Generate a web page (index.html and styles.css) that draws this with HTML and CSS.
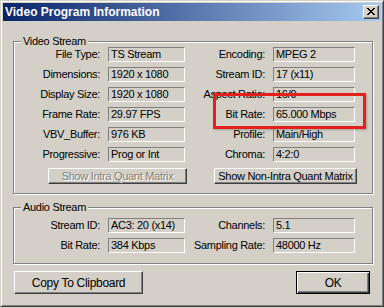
FILE: index.html
```html
<!DOCTYPE html>
<html>
<head>
  <meta charset="UTF-8" />
  <title>Video Program Information</title>
  <link rel="stylesheet" href="styles.css">
</head>
<body>
  <div class="window">
    <div class="titlebar">
      <span class="title">Video Program Information</span>
      <button class="close-btn">
        <svg width="8" height="7" viewBox="0 0 8 7" shape-rendering="crispEdges">
          <path d="M0 0h2v1H0zM6 0h2v1H6zM1 1h2v1H1zM5 1h2v1H5zM2 2h4v1H2zM3 3h2v1H3zM2 4h4v1H2zM1 5h2v1H1zM5 5h2v1H5zM0 6h2v1H0zM6 6h2v1H6z" fill="#000"/>
        </svg>
      </button>
    </div>

    <div class="dialog">
      <div class="group video-group">
        <span class="group-title">Video Stream</span>
        <div class="rows">
          <span class="label">File Type:</span><span class="field">TS Stream</span>
          <span class="label">Encoding:</span><span class="field">MPEG 2</span>

          <span class="label">Dimensions:</span><span class="field">1920 x 1080</span>
          <span class="label">Stream ID:</span><span class="field">17 (x11)</span>

          <span class="label">Display Size:</span><span class="field">1920 x 1080</span>
          <span class="label">Aspect Ratio:</span><span class="field">16/9</span>

          <span class="label">Frame Rate:</span><span class="field">29.97 FPS</span>
          <span class="label">Bit Rate:</span><span class="field">65.000 Mbps</span>

          <span class="label">VBV_Buffer:</span><span class="field">976 KB</span>
          <span class="label">Profile:</span><span class="field">Main/High</span>

          <span class="label">Progressive:</span><span class="field">Prog or Int</span>
          <span class="label">Chroma:</span><span class="field">4:2:0</span>
        </div>
        <div class="matrix-buttons">
          <button class="btn btn-intra" disabled>Show Intra Quant Matrix</button>
          <button class="btn btn-nonintra">Show Non-Intra Quant Matrix</button>
        </div>
      </div>

      <div class="group audio-group">
        <span class="group-title">Audio Stream</span>
        <div class="rows">
          <span class="label">Stream ID:</span><span class="field">AC3: 20 (x14)</span>
          <span class="label">Channels:</span><span class="field">5.1</span>

          <span class="label">Bit Rate:</span><span class="field">384 Kbps</span>
          <span class="label">Sampling Rate:</span><span class="field">48000 Hz</span>
        </div>
      </div>

      <div class="dialog-buttons">
        <button class="btn btn-copy">Copy To Clipboard</button>
        <button class="btn btn-ok">OK</button>
      </div>
    </div>

    <!-- annotation drawn over the dialog -->
    <div class="highlight"></div>
  </div>
</body>
</html>
```

FILE: styles.css
```css
:root {
  --face: #d4d0c8;
  --shadow: #808080;
  --dark: #404040;
  --light: #ffffff;
}

* {
  margin: 0;
  padding: 0;
  box-sizing: border-box;
}

body {
  background-color: var(--face);
  font-family: "Liberation Sans", Arial, sans-serif;
  font-size: 11px;
  letter-spacing: -0.3px;
  color: #000;
}

.window {
  position: relative;
  width: 384px;
  height: 307px;
  padding: 2px;
  background-color: var(--face);
  border: 1px solid;
  border-color: var(--face) var(--dark) var(--dark) var(--face);
  box-shadow: inset 1px 1px 0 var(--light), inset -1px -1px 0 var(--shadow);
}

.titlebar {
  height: 18px;
  display: flex;
  align-items: center;
  justify-content: space-between;
  padding: 0 2px;
  background: linear-gradient(to right, #0a246a, #a6caf0);
}

.title {
  color: #fff;
  font-weight: bold;
  font-size: 12px;
  letter-spacing: 0;
  line-height: 18px;
}

.close-btn {
  width: 16px;
  height: 14px;
  display: flex;
  align-items: center;
  justify-content: center;
  background-color: var(--face);
  border: 1px solid;
  border-color: var(--light) var(--dark) var(--dark) var(--light);
  box-shadow: inset -1px -1px 0 var(--shadow);
  padding-bottom: 1px;
}

.dialog {
  padding: 20px 8px 0 10px;
}

.group {
  position: relative;
  border: 1px solid var(--shadow);
  box-shadow: 1px 1px 0 var(--light), inset 1px 1px 0 var(--light);
}

.group-title {
  position: absolute;
  top: -7px;
  left: 7px;
  padding: 0 2px;
  line-height: 13px;
  background-color: var(--face);
}

.video-group {
  padding: 5px 0 9px;
}

.audio-group {
  margin-top: 13px;
  padding: 10px 0;
}

.rows {
  display: grid;
  grid-template-columns: 94px 77px 88px 82px;
  grid-auto-rows: 15px;
  row-gap: 5px;
}

.label {
  text-align: right;
  padding-right: 8px;
  line-height: 15px;
  white-space: nowrap;
}

.field {
  line-height: 13px;
  padding-left: 2px;
  white-space: nowrap;
  overflow: hidden;
  border: 1px solid;
  border-color: var(--shadow) var(--light) var(--light) var(--shadow);
}

.btn {
  font-family: inherit;
  font-size: 11px;
  letter-spacing: -0.3px;
  color: #000;
  background-color: var(--face);
  border: 1px solid;
  border-color: var(--light) var(--dark) var(--dark) var(--light);
  box-shadow: inset -1px -1px 0 var(--shadow);
  white-space: nowrap;
}

.matrix-buttons {
  display: flex;
  gap: 27px;
  margin: 6px 0 0 34px;
}

.matrix-buttons .btn {
  height: 16px;
  line-height: 13px;
}

.btn-intra {
  width: 139px;
}

.btn-intra:disabled {
  color: var(--shadow);
  text-shadow: 1px 1px 0 var(--light);
}

.btn-nonintra {
  width: 143px;
}

.dialog-buttons {
  display: flex;
  justify-content: space-between;
  margin: 7px 3px 0 1px;
}

.dialog-buttons .btn {
  height: 23px;
  font-size: 12px;
}

.btn-copy {
  width: 129px;
}

.btn-ok {
  width: 74px;
  border: 1px solid #000;
  box-shadow: inset 1px 1px 0 var(--light), inset -1px -1px 0 var(--dark), inset -2px -2px 0 var(--shadow);
}

.highlight {
  position: absolute;
  left: 212px;
  top: 92px;
  width: 153px;
  height: 36px;
  border: 3px solid #e3201b;
  box-shadow: 1px 1px 2px rgba(0, 0, 0, 0.25);
}
```
